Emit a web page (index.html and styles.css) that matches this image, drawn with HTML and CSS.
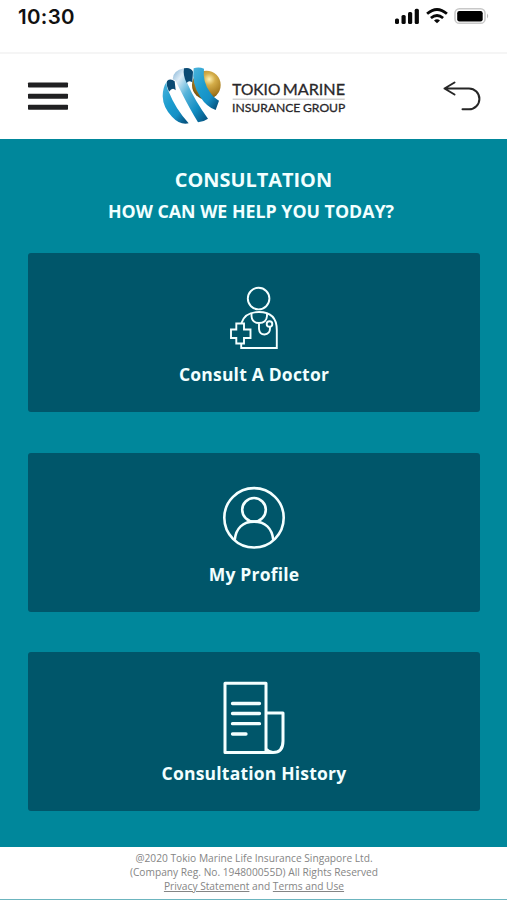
FILE: index.html
```html
<!DOCTYPE html>
<html lang="en">
<head>
<meta charset="utf-8">
<title>Consultation</title>
<link rel="stylesheet" href="styles.css">
</head>
<body>
<div class="status">
  <span class="time">10:30</span>
  <svg class="signals" width="96" height="18" viewBox="0 0 96 18">
    <g fill="#080808">
      <rect x="0" y="11.5" width="4" height="5.5" rx="1.5"/><rect x="6.5" y="8" width="4.2" height="9" rx="1.5"/><rect x="13" y="5" width="4.2" height="12" rx="1.5"/><rect x="19.7" y="1.8" width="4.2" height="15.2" rx="1.5"/>
      <path d="M42 16.3l-3-2.9q3-2.2 6 0z"/>
    </g>
    <g fill="none" stroke="#080808" stroke-width="2.8"><path d="M32.1 6.8q9.9-8.6 19.8 0M35.9 11q6.1-5 12.2 0"/></g>
    <rect x="60" y="1.7" width="30" height="14.6" rx="4.4" fill="#fff" stroke="#c8c8c8" stroke-width="1.6"/>
    <rect x="62.2" y="4" width="25.5" height="10.5" rx="2.2" fill="#000"/>
    <path d="M92 6.5q2.4 2.5 0 5z" fill="#bbb"/>
  </svg>
</div>
<header class="header">
  <svg class="menu" width="42" height="30" viewBox="0 0 42 30" fill="#202022"><rect x="1" y="1.5" width="40" height="5" rx=".8"/><rect x="1" y="12.7" width="40" height="5" rx=".8"/><rect x="1" y="23.7" width="40" height="5" rx=".8"/></svg>
  <svg class="logo" width="190" height="60" viewBox="30 34 570 180">
    <defs>
      <linearGradient id="blue" x1="0" y1="0" x2=".8" y2="1"><stop offset="0" stop-color="#4db4dc"/><stop offset=".45" stop-color="#1c9cce"/><stop offset=".75" stop-color="#1590c6"/><stop offset="1" stop-color="#075784"/></linearGradient>
      <linearGradient id="pale" x1="0" y1="0" x2=".9" y2="1"><stop offset="0" stop-color="#7daed2"/><stop offset=".2" stop-color="#dcecf7"/><stop offset=".44" stop-color="#58b4da"/><stop offset=".75" stop-color="#118dc2"/><stop offset="1" stop-color="#075684"/></linearGradient>
      <radialGradient id="gold" cx=".6" cy=".3" r=".7"><stop offset="0" stop-color="#fff1b0"/><stop offset=".3" stop-color="#d4ad49"/><stop offset=".75" stop-color="#a77b20"/><stop offset="1" stop-color="#76530d"/></radialGradient>
    </defs>
    <circle cx="169" cy="91" r="43" fill="url(#gold)"/>
    <path d="M131 41Q146 36 162 42Q157 80 180 113Q191 130 207 138L197 166Q170 157 151 127Q124 88 131 41Z" fill="url(#blue)"/>
    <path d="M68 74Q68 48 102 41Q102 64 113 88Q135 139 174 192Q160 202 144 203Q116 156 98 120Q84 92 76 78Z" fill="url(#pale)"/>
    <path d="M102 41Q121 36 129 51L127 83Q116 75 110 85Q98 62 102 41Z" fill="#0a4a73"/>
    <path d="M51 79Q62 70 74 80L77 107Q68 96 57 111Q48 91 51 79Z" fill="#0a4a73"/>
    <path d="M50 81Q48 95 57 113Q76 162 116 206Q90 212 66 186Q39 159 38 125Q38 98 50 81Z" fill="url(#blue)"/>
    <g class="logo-text" fill="#29272a">
      <text x="247" y="121.5" font-size="45" textLength="144" lengthAdjust="spacingAndGlyphs">TOKIO</text>
      <text x="398" y="121.5" font-size="45" textLength="187" lengthAdjust="spacingAndGlyphs">MARINE</text>
      <text x="246" y="171" font-size="37" textLength="205" lengthAdjust="spacingAndGlyphs">INSURANCE</text>
      <text x="459" y="171" font-size="37" textLength="127" lengthAdjust="spacingAndGlyphs">GROUP</text>
    </g>
    <path d="M248 133.5H584" stroke="#aaa" stroke-width="2.5"/>
  </svg>
  <svg class="back" width="40" height="32" viewBox="0 0 40 32" fill="none" stroke="#262626" stroke-width="2" stroke-linecap="round" stroke-linejoin="round"><path d="M13.5 2.5L3.5 8.5L13.5 14.5M3.5 8.5H28A10.4 10.4 0 0 1 28 29.3H21.5"/></svg>
</header>
<main class="main">
  <h1>CONSULTATION</h1>
  <h2>HOW CAN WE HELP YOU TODAY?</h2>
  <div class="cards">
    <a class="card">
      <svg class="icon" width="64" height="76" viewBox="0 0 64 76" stroke-width="1.9">
        <circle cx="36.6" cy="13.6" r="10.8"/>
        <path d="M19.5 38C22 30 28 27 37 27Q54.8 27 54.8 45V63H19.2V58"/>
        <path d="M14.3 38.5H22V44.5H28.5V53H22V58.5H14.3V53H9V44.5H14.3Z"/>
        <path d="M29.5 28V31Q30 38 37 38Q44.5 38 45 31V28M37 38V44Q37.5 49.5 42.5 49.5Q48 49 48 43.5V41.5"/>
        <circle cx="47.5" cy="39" r="2.8"/>
      </svg>
      <span class="label doctor">Consult A Doctor</span>
    </a>
    <a class="card">
      <svg class="icon" width="64" height="76" viewBox="0 0 64 76" stroke-width="2.6">
        <circle cx="32" cy="32.8" r="29.7"/><circle cx="32" cy="24.8" r="11.8"/><path d="M12.7 54.8C14 43.3 21 36.6 32 36.6S50 43.3 51.3 54.8"/>
      </svg>
      <span class="label profile">My Profile</span>
    </a>
    <a class="card">
      <svg class="icon" width="64" height="76" viewBox="0 0 64 76" stroke-width="3">
        <path d="M44 68.5H3V-.8H44V65Q47 68.5 51 68.5Q61 68.5 61 57V29H44M44 64V68.5H51" stroke-linejoin="round"/>
        <path d="M10.5 19.5H37.5M10.5 29.5H37.5M10.5 39.7H37.5M10.5 50H24" stroke-width="3.3" stroke-linecap="round"/>
      </svg>
      <span class="label history">Consultation History</span>
    </a>
  </div>
</main>
<footer class="footer">
  <p class="copyright">@2020 Tokio Marine Life Insurance Singapore Ltd.</p>
  <p class="registration">(Company Reg. No. 194800055D) All Rights Reserved</p>
  <p class="links"><a>Privacy Statement</a> and <a>Terms and Use</a></p>
</footer>
</body>
</html>
```
FILE: styles.css
```css
* { box-sizing: border-box; }
body { margin: 0; height: 900px; overflow: hidden; background: #fff; font-family: "Open Sans", "Noto Sans", sans-serif; }
h1, h2, p { margin: 0; }
.status { height: 52px; padding: 7px 16px 0 18px; display: flex; align-items: flex-start; justify-content: space-between; }
.time { font: 600 20.5px/20px Inter, sans-serif; letter-spacing: .3px; color: #111; }
.header { height: 87px; padding: 0 26px 2px 27px; display: flex; align-items: center; justify-content: space-between; border-top: 2px solid #f5f5f5; }
.menu { flex: none; }
.logo { flex: none; margin-left: 0; }
.logo-text { font-family: Lato, sans-serif; font-weight: 400; stroke: #29272a; stroke-width: .9; }
.back { flex: none; }
.main { height: 708px; padding: 28px 27px 0 28px; background: #00879b; color: #f2ffff; text-align: center; }
h1 { font-size: 19.9px; font-weight: 700; line-height: 26px; padding-right: 1px; }
h2 { margin-top: 6px; font-size: 17.8px; font-weight: 700; line-height: 25px; padding-right: 6px; }
.cards { margin-top: 29.3px; display: grid; gap: 40.3px; }
.card { height: 159px; padding-top: 32px; display: flex; flex-direction: column; align-items: center; background: #00566a; border-radius: 3px; }
.icon { flex: none; overflow: visible; fill: none; stroke: #f4ffff; }
.label { font-size: 17.5px; font-weight: 700; line-height: 24px; margin-top: 1px; letter-spacing: .2px; white-space: nowrap; }
.footer { height: 53px; padding-top: 4px; border-bottom: 1px solid #6cb5bf; background: #fff; color: #858585; text-align: center; font-size: 10.2px; line-height: 14px; }
.footer p { padding-left: 1px; }
.footer a { text-decoration: underline; }
```
